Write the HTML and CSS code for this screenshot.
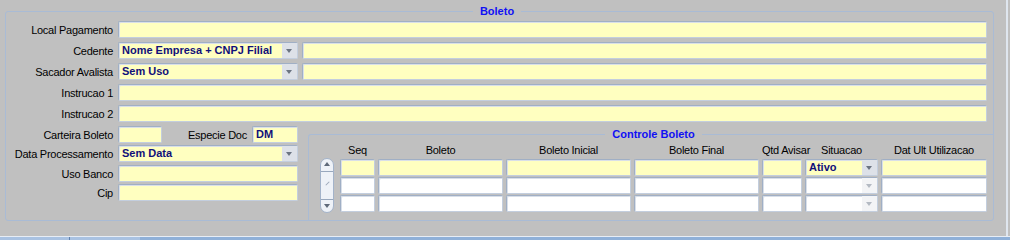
FILE: index.html
```html
<!DOCTYPE html>
<html lang="pt">
<head>
    <meta charset="UTF-8">
    <title>Boleto</title>
    <link rel="stylesheet" href="styles.css">
</head>
<body>
    <div class="window">
        <!-- Boleto -->
        <fieldset class="frame boleto">
            <legend>Boleto</legend>
            <div class="row"><label>Local Pagamento</label><span class="field grow"></span></div>
            <div class="row">
                <label>Cedente</label>
                <span class="field select w180"><span class="value">Nome Empresa + CNPJ Filial</span><span class="btn"></span></span>
                <span class="field grow"></span>
            </div>
            <div class="row">
                <label>Sacador Avalista</label>
                <span class="field select w180"><span class="value">Sem Uso</span><span class="btn"></span></span>
                <span class="field grow"></span>
            </div>
            <div class="row"><label>Instrucao 1</label><span class="field grow"></span></div>
            <div class="row"><label>Instrucao 2</label><span class="field grow"></span></div>

            <div class="lower">
                <div class="left">
                    <div class="row">
                        <label>Carteira Boleto</label>
                        <span class="field w44"></span>
                        <label class="inline">Especie Doc</label>
                        <span class="field w46"><span class="value">DM</span></span>
                    </div>
                    <div class="row gap3">
                        <label>Data Processamento</label>
                        <span class="field select w180"><span class="value">Sem Data</span><span class="btn"></span></span>
                    </div>
                    <div class="row gap4"><label>Uso Banco</label><span class="field w180"></span></div>
                    <div class="row gap2"><label>Cip</label><span class="field w180"></span></div>
                </div>

                <!-- Controle Boleto -->
                <fieldset class="frame controle">
                    <legend>Controle Boleto</legend>
                    <div class="grid">
                        <span></span>
                        <span class="head">Seq</span>
                        <span class="head">Boleto</span>
                        <span class="head">Boleto Inicial</span>
                        <span class="head">Boleto Final</span>
                        <span class="head">Qtd Avisar</span>
                        <span class="head">Situacao</span>
                        <span class="head">Dat Ult Utilizacao</span>

                        <div class="scroll">
                            <span class="arrow up"></span>
                            <span class="grip"></span>
                            <span class="arrow down"></span>
                        </div>

                        <span class="field"></span><span class="field"></span><span class="field"></span><span class="field"></span><span class="field"></span>
                        <span class="field select"><span class="value">Ativo</span><span class="btn"></span></span>
                        <span class="field"></span>

                        <span class="field off"></span><span class="field off"></span><span class="field off"></span><span class="field off"></span><span class="field off"></span>
                        <span class="field select off"><span class="value"></span><span class="btn"></span></span>
                        <span class="field off"></span>

                        <span class="field off"></span><span class="field off"></span><span class="field off"></span><span class="field off"></span><span class="field off"></span>
                        <span class="field select off"><span class="value"></span><span class="btn"></span></span>
                        <span class="field off"></span>
                    </div>
                </fieldset>
            </div>
        </fieldset>
    </div>
    <div class="statusbar"><span class="tab first"></span><span class="tab"></span></div>
</body>
</html>
```

FILE: styles.css
```css
/* Global styling */
* { box-sizing: border-box; margin: 0; padding: 0; }
body { background: #c0c0c0; font-family: "Liberation Sans", Arial, sans-serif; font-size: 11px; color: #000; overflow: hidden; }
.window { width: 1008px; height: 236px; padding: 5px 0 0 5px; border-right: 2px solid #dfe6ef; }

/* Frames */
.frame { border: 1px solid #a9bbd5; border-radius: 3px; min-width: 0; }
.frame legend { margin: 0 auto; padding: 0 7px; line-height: 13px; font-size: 11px; font-weight: bold; color: #1010f4; }
.boleto { width: 989px; padding: 3px 6px 0 1px; }
.controle { flex: 1; margin: 2px -6px 0 6px; padding: 3px 6px 8px 11px; border-right: none; border-bottom: none; border-radius: 3px 0 0 0; }

/* Rows */
.row { display: flex; align-items: center; height: 17px; margin-bottom: 4px; }
.row label { width: 111px; padding-right: 5px; text-align: right; letter-spacing: -0.25px; white-space: nowrap; }
.row label.inline { width: 90px; }
.row .field + .field { margin-left: 4px; }
.gap3 { margin-top: -1px; }
.lower { display: flex; }
.left { width: 295px; }
.left .row { margin-bottom: 3px; }
.left .row.gap4 { margin-top: 1px; margin-bottom: 2px; }

/* Fields */
.field { display: flex; height: 17px; background: #ffffc0; border: 1px solid #a0afc5; border-bottom-color: #c3cede; border-right-color: #c3cede; border-radius: 2px; box-shadow: inset 1px 1px 0 #d9dfe8; }
.field.off { background: #fff; }
.grow { flex: 1; }
.w180 { width: 180px; }
.w44 { width: 44px; }
.w46 { width: 46px; }
.value { flex: 1; padding-left: 3px; line-height: 15px; font-weight: bold; color: #10107a; white-space: nowrap; overflow: hidden; }
.select .btn { width: 15px; background: #dde1e8; position: relative; }
.select .btn::after { content: ""; position: absolute; left: 4px; top: 6px; border: 3.5px solid transparent; border-top: 4px solid #6b7482; border-bottom: none; }
.select.off .btn { background: #f3f4f6; }
.select.off .btn::after { border-top-color: #b4bac3; }

/* Controle grid */
.grid { display: grid; grid-template-columns: 17px 35px 125px 125px 125px 40px 73px 106px; grid-template-rows: 14px 17px 17px 17px; column-gap: 3px; row-gap: 1px; }
.grid .head { text-align: center; line-height: 12px; letter-spacing: -0.25px; white-space: nowrap; }
.grid .field { width: 100%; }

/* Scrollbar */
.scroll { grid-column: 1; grid-row: 2 / span 3; width: 14px; margin-top: -1px; height: 55px; border: 1px solid #a3b3ca; border-radius: 7px; background: #eef2f8; display: flex; flex-direction: column; }
.scroll .arrow { height: 13px; position: relative; }
.scroll .arrow.up { border-bottom: 1px solid #98a8be; }
.scroll .arrow.down { border-top: 1px solid #98a8be; }
.scroll .arrow::after { content: ""; position: absolute; left: 3px; border: 3.5px solid transparent; }
.scroll .up::after { top: 3px; border-bottom: 4px solid #5f6a7a; border-top: none; }
.scroll .down::after { top: 4px; border-top: 4px solid #5f6a7a; border-bottom: none; }
.scroll .grip { flex: 1; position: relative; }
.scroll .grip::after { content: ""; position: absolute; left: 4px; top: 11px; width: 5px; height: 1px; background: #9aa7b8; transform: rotate(-45deg); }

/* Bottom bar */
.statusbar { display: flex; height: 4px; border-top: 1px solid #e7edf5; background: #8fb0d8; }
.tab.first { width: 70px; border-right: 1px solid #5d7fae; }
.tab { width: 70px; background: #a9c2e2; }
```
